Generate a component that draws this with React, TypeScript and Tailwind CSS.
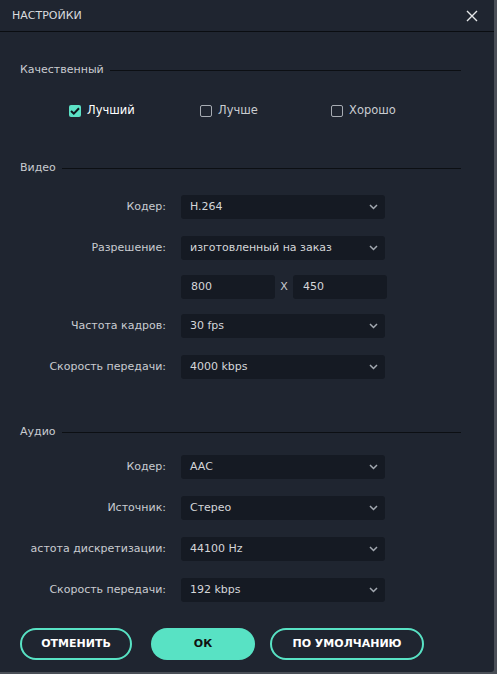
import React from "react";

const font = { fontFamily: '"DejaVu Sans", Verdana, sans-serif' };

function Chevron() {
  return (
    <svg width="9" height="6" viewBox="0 0 9 6" className="absolute right-[7px] top-[9px]">
      <path d="M1 1 L4.5 4.5 L8 1" stroke="#a3a9b1" strokeWidth="1.5" fill="none" />
    </svg>
  );
}

function Select({ value }: { value: string }) {
  return (
    <div className="relative w-[204px] h-[24px] rounded-[3px] bg-[#151a23] flex items-center pl-[9px] text-[11px] text-[#d4d6d9]">
      {value}
      <Chevron />
    </div>
  );
}

function Row({ label, value, className = "" }: { label: string; value: string; className?: string }) {
  return (
    <div className={"flex items-center " + className}>
      <div className="w-[166px] text-[11px] text-[#c9ccd0] whitespace-nowrap overflow-hidden flex justify-end">
        <span className="whitespace-nowrap">{label}</span>
      </div>
      <div className="ml-[15px]">
        <Select value={value} />
      </div>
    </div>
  );
}

function Section({ title, className = "" }: { title: string; className?: string }) {
  return (
    <div className={"flex items-center h-[14px] pl-[20px] pr-[33px] " + className}>
      <span className="text-[11px] text-[#c9ccd0] leading-none">{title}</span>
      <div className="flex-1 h-px bg-[#0c0f13] ml-[6px] mt-[3px]" />
    </div>
  );
}

function Check({ checked, label }: { checked?: boolean; label: string }) {
  return (
    <div className="w-[131px] flex items-center">
      {checked ? (
        <div className="w-[12px] h-[12px] rounded-[2px] bg-[#5ce1c5] flex items-center justify-center">
          <svg width="10" height="8" viewBox="0 0 10 8">
            <path d="M1 4 L3.8 6.6 L9 1.2" stroke="#10151c" strokeWidth="2" fill="none" />
          </svg>
        </div>
      ) : (
        <div className="w-[12px] h-[12px] rounded-[2px] border border-[#a7acb3]" />
      )}
      <span className={"ml-[6px] text-[11.5px] " + (checked ? "text-white" : "text-[#c9ccd0]")}>{label}</span>
    </div>
  );
}

export default function App() {
  return (
    <div className="w-[497px] h-[674px] bg-[#4a4f57] overflow-hidden" style={font}>
      <div className="w-[494px] h-[672px] bg-[#1f2530] rounded-br-[3px] flex flex-col">
        <div className="h-[32px] flex items-center justify-between pl-[12px] pr-[16px] border-b border-[#0a0d11]">
          <span className="text-[11px] text-[#dadcdf] mt-[1px]">НАСТРОЙКИ</span>
          <svg width="12" height="12" viewBox="0 0 12 12">
            <path d="M1 1 L11 11 M11 1 L1 11" stroke="#e6e8ea" strokeWidth="1.4" />
          </svg>
        </div>

        <Section title="Качественный" className="mt-[30px]" />

        <div className="flex items-center h-[16px] pl-[69px] mt-[27px]">
          <Check checked label="Лучший" />
          <Check label="Лучше" />
          <Check label="Хорошо" />
        </div>

        <Section title="Видео" className="mt-[41px]" />

        <Row label="Кодер:" value="H.264" className="mt-[21px]" />
        <Row label="Разрешение:" value="изготовленный на заказ" className="mt-[17px]" />
        <div className="flex items-center mt-[15px] pl-[181px]">
          <div className="w-[94px] h-[24px] rounded-[3px] bg-[#151a23] flex items-center pl-[10px] text-[11px] text-[#d4d6d9]">800</div>
          <span className="w-[18px] text-center text-[11px] text-[#c9ccd0]">X</span>
          <div className="w-[94px] h-[24px] rounded-[3px] bg-[#151a23] flex items-center pl-[10px] text-[11px] text-[#d4d6d9]">450</div>
        </div>
        <Row label="Частота кадров:" value="30 fps" className="mt-[15px]" />
        <Row label="Скорость передачи:" value="4000 kbps" className="mt-[17px]" />

        <Section title="Аудио" className="mt-[45px]" />

        <Row label="Кодер:" value="AAC" className="mt-[17px]" />
        <Row label="Источник:" value="Стерео" className="mt-[17px]" />
        <Row label="астота дискретизации:" value="44100 Hz" className="mt-[17px]" />
        <Row label="Скорость передачи:" value="192 kbps" className="mt-[17px]" />

        <div className="flex items-center mt-[26px] pl-[20px]">
          <button className="w-[112px] h-[32px] rounded-full border-2 border-[#58e2c4] text-[11px] font-bold text-white">ОТМЕНИТЬ</button>
          <button className="ml-[19px] w-[104px] h-[32px] rounded-full bg-[#58e2c4] text-[11px] font-bold text-[#111]">ОК</button>
          <button className="ml-[15px] w-[154px] h-[32px] rounded-full border-2 border-[#58e2c4] text-[11px] font-bold text-white">ПО УМОЛЧАНИЮ</button>
        </div>
      </div>
    </div>
  );
}
